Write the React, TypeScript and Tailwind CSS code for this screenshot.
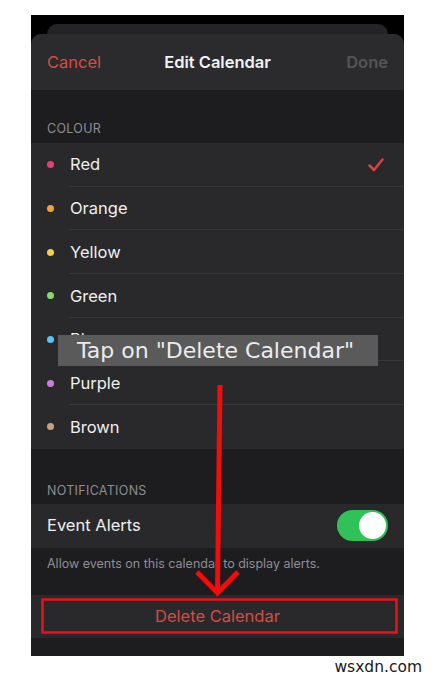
import { useState } from 'react';

type Colour = { name: string; dot: string };

const colours: Colour[] = [
  { name: 'Red', dot: 'bg-[#ea3f6c]' },
  { name: 'Orange', dot: 'bg-[#f2a23a]' },
  { name: 'Yellow', dot: 'bg-[#f7cd4a]' },
  { name: 'Green', dot: 'bg-[#86d86e]' },
  { name: 'Blue', dot: 'bg-[#5cc3f5]' },
  { name: 'Purple', dot: 'bg-[#d07ae6]' },
  { name: 'Brown', dot: 'bg-[#c8a27a]' },
];

export default function App() {
  const [selected, setSelected] = useState('Red');
  const [alerts, setAlerts] = useState(true);

  return (
    <div className="relative w-[433px] h-[676px] bg-white overflow-hidden font-['Inter','Liberation_Sans',sans-serif]">
      {/* Phone screenshot */}
      <div className="mt-[15px] ml-[31px] w-[373px] h-[641px] bg-black flex flex-col overflow-hidden">
        <div className="h-[9px]" />
        <div className="mx-[16px] h-[10px] rounded-t-[10px] bg-[#242426]" />
        <div className="flex-1 flex flex-col rounded-t-[10px] bg-[#1d1d1f] overflow-hidden">
          {/* Header */}
          <div className="h-[56px] bg-[#2b2b2d] grid grid-cols-[1fr_auto_1fr] items-center px-4 text-[16.5px]">
            <span className="text-[#d84a45]">Cancel</span>
            <span className="font-semibold text-[#f2f2f2]">Edit Calendar</span>
            <span className="text-right font-semibold text-[#545456]">Done</span>
          </div>

          <div className="h-[53px] flex items-end px-4 pb-[4px] text-[12.5px] text-[#8e8e93] tracking-wide">
            COLOUR
          </div>

          <div className="bg-[#29292b]">
            {colours.map((c, i) => (
              <div
                key={c.name}
                onClick={() => setSelected(c.name)}
                className="h-[43.7px] flex items-center relative"
              >
                <span className={`ml-[16px] w-[7px] h-[7px] rounded-full ${c.dot}`} />
                <span className="ml-[16px] text-[16.5px] text-[#efefef]">{c.name}</span>
                {selected === c.name && (
                  <svg className="ml-auto mr-[20px]" width="16" height="14" viewBox="0 0 16 14">
                    <polyline points="1.5,7.5 6,12 14.5,1.5" fill="none" stroke="#d9423f" strokeWidth="2.5" strokeLinecap="round" strokeLinejoin="round" />
                  </svg>
                )}
                {i < colours.length - 1 && (
                  <div className="absolute bottom-0 left-[38px] right-0 h-px bg-[#37373a]" />
                )}
              </div>
            ))}
          </div>

          <div className="h-[55px] flex items-end px-4 pb-[3px] text-[12.5px] text-[#8e8e93] tracking-wide">
            NOTIFICATIONS
          </div>

          <div className="h-[44px] bg-[#29292b] flex items-center justify-between px-4">
            <span className="text-[16.5px] text-[#efefef]">Event Alerts</span>
            <button
              onClick={() => setAlerts(!alerts)}
              className={`w-[51px] h-[31px] rounded-full p-[2px] flex ${alerts ? 'bg-[#31c159] justify-end' : 'bg-[#3a3a3c] justify-start'}`}
            >
              <span className="w-[27px] h-[27px] rounded-full bg-white" />
            </button>
          </div>

          <div className="h-[47px] px-4 pt-[7px] text-[12.5px] text-[#8e8e93]">
            Allow events on this calendar to display alerts.
          </div>

          <div className="h-[43px] bg-[#29292b] flex items-center justify-center text-[16.5px] text-[#d84a45]">
            Delete Calendar
          </div>
        </div>
      </div>

      {/* Annotation label */}
      <div className="absolute left-[58px] top-[335px] w-[320px] h-[31px] bg-[#5a5a5b] flex items-center pl-[19px] text-[22px] leading-none text-[#ececec] font-['DejaVu_Sans',sans-serif]">
        Tap on "Delete Calendar"
      </div>

      {/* Annotation arrow and box */}
      <svg className="absolute inset-0 pointer-events-none" width="433" height="676" viewBox="0 0 433 676">
        <line x1="220" y1="385" x2="217.5" y2="590" stroke="#f20d0d" strokeWidth="5" />
        <polyline points="197,572 217.5,593 238,572" fill="none" stroke="#f20d0d" strokeWidth="5" />
        <rect x="42.5" y="599.5" width="354" height="33" fill="none" stroke="#e3141a" strokeWidth="2.5" />
      </svg>

      <div className="absolute right-[11px] top-[656px] text-[15.5px] text-[#1a1a1a] font-['DejaVu_Sans',sans-serif]">
        wsxdn.com
      </div>
    </div>
  );
}
